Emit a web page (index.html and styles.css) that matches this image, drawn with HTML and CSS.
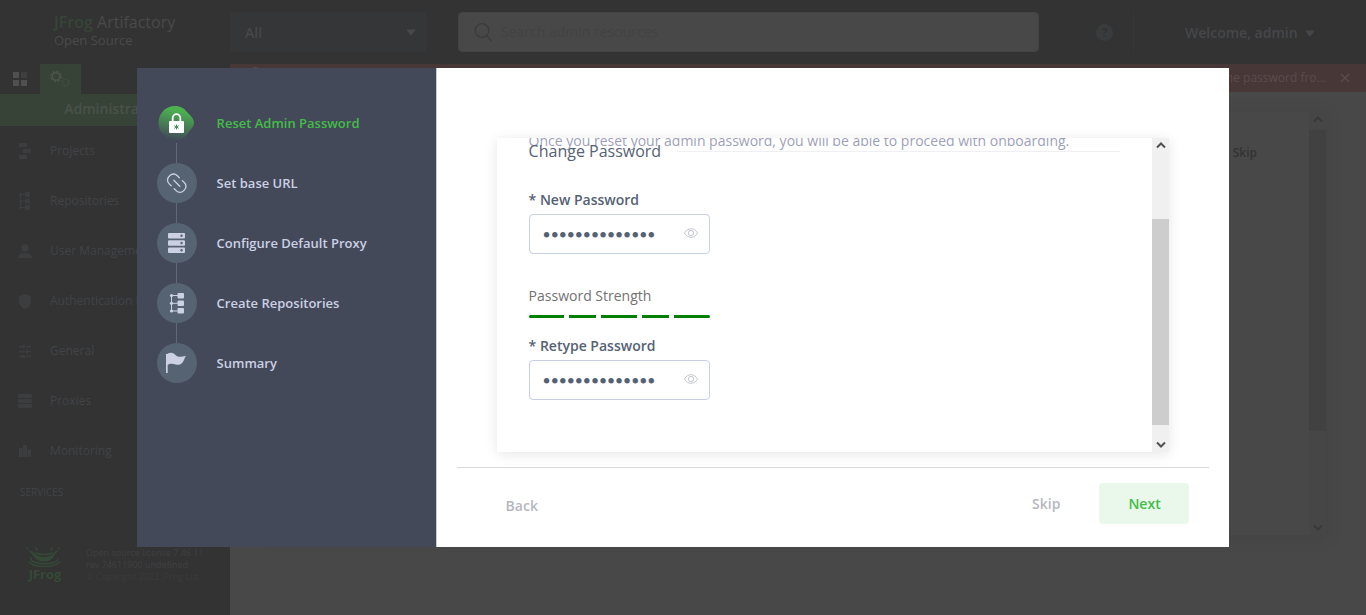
FILE: index.html
```html
<!DOCTYPE html>
<html lang="en">
<head>
<meta charset="utf-8">
<title>JFrog Artifactory</title>
<link rel="stylesheet" href="styles.css">
</head>
<body>
<div class="app">
  <header class="topbar">
    <div class="brand">
      <div class="brand-name"><span class="brand-frog">JFrog</span> Artifactory</div>
      <div class="brand-edition">Open Source</div>
    </div>
    <div class="scope">
      <select class="scope-select" aria-label="Scope"><option>All</option></select>
      <svg class="scope-caret" width="10" height="7" viewBox="0 0 10 7"><path d="M1 1h8L5 6z" fill="currentColor" stroke="currentColor" stroke-linejoin="round"/></svg>
    </div>
    <div class="search">
      <svg width="19" height="19" viewBox="0 0 19 19" fill="none" stroke="currentColor" stroke-width="1.3"><circle cx="8" cy="7.500" r="6.800"/><path d="M12.500 12.500l5 5.500"/></svg>
      <input class="search-input" type="text" placeholder="Search admin resources" aria-label="Search admin resources">
    </div>
    <button class="help" type="button" aria-label="Help">?</button>
    <button class="user" type="button">Welcome, admin
      <svg width="10" height="7" viewBox="0 0 10 7"><path d="M1 1h8L5 6z" fill="currentColor" stroke="currentColor" stroke-linejoin="round"/></svg>
    </button>
  </header>

  <aside class="sidebar">
    <div class="tabs">
      <button class="tab" type="button" aria-label="Application">
        <svg width="14" height="14" viewBox="0 0 14 14" fill="currentColor"><path d="M0 0h6v6H0zM0 8h6v6H0zM8 8h6v6H8z"/><path d="M8 0h6v6H8z" opacity=".4"/></svg>
      </button>
      <button class="tab tab-active" type="button" aria-label="Administration">
        <svg width="21" height="18" viewBox="0 0 21 18" fill="none" stroke="currentColor"><circle cx="6" cy="6.500" r="3.800" stroke-width="1.800"/><circle cx="6" cy="6.500" r="5.200" stroke-width="1.600" stroke-dasharray="2 2.080"/><g opacity=".45"><circle cx="15.500" cy="12.500" r="3" stroke-width="1.200"/><circle cx="15.500" cy="12.500" r="4.200" stroke-width="1.300" stroke-dasharray="1.600 1.700"/></g></svg>
      </button>
    </div>
    <div class="section-title">Administration</div>
    <nav class="menu">
      <a class="menu-item" href="#"><svg width="14" height="16" viewBox="0 0 14 16" fill="currentColor"><rect x="1" width="8" height="4" rx=".5"/><rect x="5" y="6" width="8" height="4" rx=".5"/><rect x="1" y="12" width="8" height="4" rx=".5"/></svg>Projects</a>
      <a class="menu-item" href="#"><svg width="14" height="18" viewBox="0 0 14 18" fill="currentColor"><path d="M2 2h6v1H3v5.500h5v1H3V15h5v1H2z"/><rect x="7" width="5" height="5" rx="1"/><rect x="7" y="6.500" width="5" height="5" rx="1"/><rect x="7" y="13" width="5" height="5" rx="1"/><circle cx="2.500" cy="2.500" r="1.500"/><circle cx="2.500" cy="9" r="1.500"/><circle cx="2.500" cy="15.500" r="1.500"/></svg>Repositories</a>
      <a class="menu-item" href="#"><svg width="14" height="14" viewBox="0 0 14 14" fill="currentColor"><circle cx="7" cy="4" r="3.800"/><path d="M0 14c0-3.500 3-5 7-5s7 1.500 7 5z"/></svg>User Management</a>
      <a class="menu-item" href="#"><svg width="14" height="15" viewBox="0 0 14 15" fill="currentColor"><path d="M7 0l6 2v5c0 4-2.500 6.700-6 8-3.500-1.300-6-4-6-8V2z"/></svg>Authentication Providers</a>
      <a class="menu-item" href="#"><svg width="14" height="13" viewBox="0 0 14 13" fill="currentColor"><path d="M1 1h3v1.500H1zM8 1h5v1.500H8zM1 6h6v1.500H1zM11 6h2v1.500h-2zM1 10.500h3V12H1zM8 10.500h5V12H8z"/><circle cx="5.500" cy="1.700" r="1.700"/><circle cx="9" cy="6.700" r="1.700"/><circle cx="5.500" cy="11.300" r="1.700"/></svg>General</a>
      <a class="menu-item" href="#"><svg width="14" height="14" viewBox="0 0 14 14" fill="currentColor"><rect width="14" height="4" rx="1"/><rect y="5" width="14" height="4" rx="1"/><rect y="10" width="14" height="4" rx="1"/></svg>Proxies</a>
      <a class="menu-item" href="#"><svg width="14" height="12" viewBox="0 0 14 12" fill="currentColor"><path d="M1 3h3.500v9H1zM5 0h4v12H5zM9.500 4.500H13V12H9.500z"/></svg>Monitoring</a>
    </nav>
    <div class="services">SERVICES</div>
    <div class="license">
      <div class="frog-logo">
        <svg width="36" height="20" viewBox="0 0 36 20" fill="none" stroke="currentColor" stroke-width="1.600" stroke-linecap="round"><path d="M10 6c3 2 13 2 16 0"/><path d="M8 7c1 9 19 9 20 0-4 5-16 5-20 0z" fill="currentColor"/><path d="M5 11c-2 7 26 8 27 1"/><path d="M3 15c6 6 24 6 31 0"/><path d="M1 1l.5.500M4 4l3 3M33 1l-.5.500M31 4l-3 3M10 1l1 2M26 1l-1 2"/></svg>
        <span>JFrog</span>
      </div>
      <div class="license-text">Open source license 7.46.11<br>rev 74611900 undefined<br><span class="copyright">© Copyright 2022 JFrog Ltd</span></div>
    </div>
  </aside>

  <main class="content">
    <div class="banner">
      <span class="banner-dot"></span>
      <span class="banner-text">the password fro...</span>
      <button class="banner-close" type="button" aria-label="Close"><svg width="10" height="10" viewBox="0 0 10 10" stroke="currentColor" stroke-width="1.200"><path d="M1 1l8 8M9 1L1 9"/></svg></button>
    </div>
    <div class="page-card">
      <a class="page-skip" href="#">Skip</a>
      <div class="rail rail-dim">
        <svg class="rail-arrow" width="10" height="7" viewBox="0 0 10 7"><path d="M1 5.500l4-4 4 4" fill="none" stroke="currentColor" stroke-width="2"/></svg>
        <div class="rail-track"><div class="rail-thumb"></div></div>
        <svg class="rail-arrow" width="10" height="7" viewBox="0 0 10 7"><path d="M1 1.500l4 4 4-4" fill="none" stroke="currentColor" stroke-width="2"/></svg>
      </div>
    </div>
  </main>
</div>

<div class="overlay">
  <div class="modal" role="dialog" aria-label="Onboarding">
    <ol class="steps">
      <li class="step step-current">
        <span class="step-icon"><svg width="40" height="40" viewBox="0 0 40 40"><defs><linearGradient id="blob" x1=".6" y1="0" x2=".4" y2="1"><stop offset=".15" stop-color="#4caf50"/><stop offset="1" stop-color="#434959"/></linearGradient></defs><path d="M18 3c6 0 9 2.500 12 6 4 4 7 7 7 11 0 3.500-3 6-6 10-3 4-6 7-11 7C10 37 1.500 30 1.500 20 1.500 11 8 3 18 3z" fill="url(#blob)"/><rect x="12" y="18" width="15" height="12" rx="1" fill="#fff"/><path d="M15.700 18v-3a3.800 3.800 0 0 1 7.600 0v3" fill="none" stroke="#fff" stroke-width="1.800"/><path d="M19.500 21.500v5M17.300 22.700l4.400 2.600M21.700 22.700l-4.400 2.600" stroke="#46865a" stroke-width="1"/></svg></span>Reset Admin Password</li>
      <li class="step">
        <span class="step-icon"><svg width="22" height="22" viewBox="0 0 22 22" fill="none" stroke="currentColor" stroke-width="1.300" stroke-linecap="round"><path d="M5.200 13.800L3 11.600a5 5 0 0 1 0-7.100l1-1a5 5 0 0 1 7.100 0l2.200 2.200"/><path d="M8.200 16.700l2.200 2.200a5 5 0 0 0 7.100 0l1-1a5 5 0 0 0 0-7.100l-2.200-2.200"/><path d="M7.800 8.200l6 6"/></svg></span>Set base URL</li>
      <li class="step">
        <span class="step-icon"><svg width="18" height="20" viewBox="0 0 18 20" fill="currentColor"><rect width="17" height="5.500" rx="1"/><rect y="7.300" width="17" height="5.500" rx="1"/><rect y="14.500" width="17" height="5.500" rx="1"/><g fill="#566373"><circle cx="13.500" cy="2.800" r="1.200"/><circle cx="13.500" cy="10" r="1.200"/><circle cx="13.500" cy="17.200" r="1.200"/></g></svg></span>Configure Default Proxy</li>
      <li class="step">
        <span class="step-icon"><svg width="16" height="21" viewBox="0 0 16 21"><path d="M2.500 2.500H9M2.500 10.300H9M2.500 18H9M2.500 2.500V18" fill="none" stroke="currentColor"/><g fill="currentColor"><rect x="8.500" width="6.500" height="5.500" rx="1"/><rect x="8.500" y="7.500" width="6.500" height="5.500" rx="1"/><rect x="8.500" y="15" width="6.500" height="5.500" rx="1"/><circle cx="2.500" cy="2.500" r="1.600"/><circle cx="2.500" cy="10.300" r="1.600"/><circle cx="2.500" cy="18" r="1.600"/></g></svg></span>Create Repositories</li>
      <li class="step">
        <span class="step-icon"><svg width="22" height="22" viewBox="0 0 22 22" fill="currentColor"><path d="M0 2h1.700v19H0z"/><path d="M0 3c3-3 7-3 10 .5 2 1.700 5 1.500 10 .2-1.700 2-2 7-6 8.800-4.500 1.500-6.500-2.700-13 .5H0z"/></svg></span>Summary</li>
    </ol>

    <div class="modal-main">
      <div class="panel">
        <form class="panel-body">
          <p class="intro">Once you reset your admin password, you will be able to proceed with onboarding.</p>
          <h2 class="section-head">Change Password</h2>
          <label class="field-label" for="new-password">* New Password</label>
          <div class="field">
            <input class="field-input" id="new-password" type="password" value="Artifactory#22">
            <button class="eye" type="button" aria-label="Show new password"><svg width="14" height="10" viewBox="0 0 14 10" fill="none" stroke="currentColor"><path d="M.5 5C3.500-.7 10.500-.7 13.500 5c-3 5.700-10 5.700-13 0z"/><circle cx="7" cy="5" r="2.600"/></svg></button>
          </div>
          <div class="strength">
            <span class="strength-label">Password Strength</span>
            <div class="strength-bars"><i></i><i></i><i></i><i></i><i></i></div>
          </div>
          <label class="field-label" for="retype-password">* Retype Password</label>
          <div class="field">
            <input class="field-input" id="retype-password" type="password" value="Artifactory#22">
            <button class="eye" type="button" aria-label="Show retyped password"><svg width="14" height="10" viewBox="0 0 14 10" fill="none" stroke="currentColor"><path d="M.5 5C3.500-.7 10.500-.7 13.500 5c-3 5.700-10 5.700-13 0z"/><circle cx="7" cy="5" r="2.600"/></svg></button>
          </div>
        </form>
        <div class="rail">
          <svg class="rail-arrow" width="10" height="7" viewBox="0 0 10 7"><path d="M1 5.500l4-4 4 4" fill="none" stroke="currentColor" stroke-width="2"/></svg>
          <div class="rail-track rail-track-end"><div class="rail-thumb"></div></div>
          <svg class="rail-arrow" width="10" height="7" viewBox="0 0 10 7"><path d="M1 1.500l4 4 4-4" fill="none" stroke="currentColor" stroke-width="2"/></svg>
        </div>
      </div>
      <footer class="actions">
        <button class="action action-back" type="button">Back</button>
        <button class="action" type="button">Skip</button>
        <button class="action action-next" type="button">Next</button>
      </footer>
    </div>
  </div>
</div>
</body>
</html>
```
FILE: styles.css
```css
* { box-sizing: border-box; }
body {
  margin: 0;
  font: 13px/20px "Open Sans", sans-serif;
  color: #414347;
  background: #484848;
}
button, input, select { font: inherit; color: inherit; border: 0; background: none; padding: 0; margin: 0; }
a { color: inherit; text-decoration: none; }
svg { display: block; flex: none; }

.app {
  display: grid;
  grid-template: 64px 1fr / 230px 1fr;
  height: 100vh;
  overflow: hidden;
}

/* top bar */
.topbar {
  grid-column: 1 / -1;
  display: flex;
  align-items: center;
  background: #333;
}
.brand { width: 230px; padding: 0 0 2px 54px; color: #4a4a4a; }
.brand-name { font-size: 16px; line-height: 18px; }
.brand-frog { color: #374537; font-weight: 600; }
.brand-edition { font-size: 13px; line-height: 18px; }
.scope { position: relative; width: 197px; }
.scope-select {
  appearance: none;
  width: 100%;
  height: 40px;
  padding: 2px 15px 0;
  border-radius: 4px;
  background: #343638;
  color: #46484a;
  font-size: 14px;
  font-weight: 600;
}
.scope-caret { position: absolute; right: 11px; top: 17px; color: #47494b; }
.search {
  flex: 1;
  display: flex;
  align-items: center;
  gap: 8px;
  height: 40px;
  margin-left: 31px;
  padding: 0 15px;
  border: 1px solid #424344;
  border-radius: 4px;
  background: #484848;
  color: #3b3b3c;
}
.search-input { flex: 1; font-size: 14px; outline: 0; }
.search-input::placeholder { color: #434343; opacity: 1; }
.help {
  width: 17px;
  height: 17px;
  margin: 0 20px 0 57px;
  border-radius: 50%;
  background: #3a3b3d;
  color: #333;
  font-size: 12px;
  line-height: 17px;
  font-weight: 700;
}
.user {
  display: flex;
  align-items: center;
  gap: 7px;
  width: 233px;
  height: 40px;
  padding: 2px 0 0 51px;
  border-left: 1px solid #373737;
  color: #46474a;
  font-size: 14px;
  font-weight: 600;
}

/* sidebar */
.sidebar { background: #333; overflow: hidden; }
.tabs { display: flex; height: 30px; }
.tab { display: flex; align-items: center; justify-content: center; width: 40px; color: #505050; }
.tab-active { width: 41px; background: #374337; color: #4b534b; }
.section-title {
  height: 32px;
  background: #374337;
  color: #4a524a;
  font-size: 14px;
  line-height: 30px;
  font-weight: 600;
  text-align: center;
}
.menu-item {
  display: flex;
  align-items: center;
  gap: 18px;
  height: 50px;
  padding-left: 18px;
  font-size: 12px;
  white-space: nowrap;
}
.menu-item svg { color: #3b3d3f; }
.services { padding: 6px 20px; font-size: 10px; line-height: 20px; }
.license { display: flex; gap: 22px; padding: 39px 26px 0; }
.frog-logo { width: 38px; color: #344a36; font-size: 13px; line-height: 14px; font-weight: 700; text-align: center; }
.license-text { font-size: 9px; line-height: 12px; color: #3f4042; white-space: nowrap; }
.copyright { color: #3a3b3c; }

/* page behind the dialog */
.content { display: flex; flex-direction: column; background: #484848; }
.banner {
  display: flex;
  align-items: center;
  justify-content: space-between;
  gap: 14px;
  height: 28px;
  padding: 0 16px 0 18px;
  background: #483737;
  color: #5a4d4d;
  font-size: 12px;
}
.banner-dot { width: 15px; height: 22px; border: 1px solid #5a4d4d; border-radius: 50%; }
.banner-text { flex: 1; text-align: right; }
.page-card {
  display: flex;
  justify-content: flex-end;
  height: 423px;
  margin: 20px 40px 0;
  box-shadow: 0 2px 10px #434343;
}
.page-skip { padding: 31px 52px 0 0; color: #333; font-size: 12px; font-weight: 600; }

/* scroll rails */
.rail {
  display: flex;
  flex-direction: column;
  align-items: center;
  gap: 7px;
  width: 17px;
  padding: 4px 0;
  background: #f0f0f0;
  color: #505050;
}
.rail-track { flex: 1; display: flex; flex-direction: column; width: 100%; }
.rail-track-end { justify-content: flex-end; padding-bottom: 9px; }
.rail-thumb { height: 206px; background: #cdcdcd; }
.rail-dim { background: #464646; color: #393939; }
.rail-dim .rail-thumb { height: 301px; background: #414141; }

/* onboarding dialog */
.overlay {
  position: fixed;
  inset: 0;
  display: flex;
  align-items: center;
  justify-content: center;
}
.modal { display: flex; width: 80%; background: #fff; }
.steps {
  width: 300px;
  margin: 0;
  padding: 35px 20px;
  list-style: none;
  display: flex;
  flex-direction: column;
  gap: 20px;
  border-right: 1px solid #c9cbd1;
  background: #434959;
}
.step {
  position: relative;
  display: flex;
  align-items: center;
  gap: 20px;
  height: 40px;
  color: #cbd0e3;
  font-weight: 600;
}
.step + .step::before {
  content: "";
  position: absolute;
  left: 19px;
  bottom: 100%;
  width: 1px;
  height: 20px;
  background: #5e6a7c;
}
.step-icon {
  display: flex;
  align-items: center;
  justify-content: center;
  width: 40px;
  height: 40px;
  border-radius: 50%;
  background: #566373;
}
.step-current { color: #43bc48; }
.step-current .step-icon { background: none; }

.modal-main { flex: 1; padding: 70px 20px 23px; }
.panel {
  display: flex;
  height: 314px;
  margin: 0 40px 15px;
  overflow: hidden;
  box-shadow: 0 2px 12px rgba(0, 0, 0, .1);
}
.panel-body { flex: 1; padding: 0 32px; overflow: hidden; font-size: 14px; }
.intro { margin: -7px 0 -11px; line-height: 20px; color: #9d9fba; white-space: nowrap; }
.section-head {
  display: flex;
  align-items: center;
  gap: 16px;
  margin: 0 0 28px;
  font-size: 16px;
  line-height: 22px;
  font-weight: 400;
  color: #556274;
}
.section-head::after { content: ""; flex: 1; height: 1px; background: #f0f0f4; }
.field-label { display: block; margin-bottom: 4px; line-height: 20px; font-weight: 600; color: #556274; }
.field {
  display: flex;
  align-items: center;
  width: 181px;
  height: 40px;
  padding: 0 11px 0 13px;
  border: 1px solid #c7cfe3;
  border-radius: 4px;
}
.field-input {
  flex: 1;
  min-width: 0;
  padding-top: 3px;
  outline: 0;
  font-family: "Liberation Serif", serif;
  font-size: 23px;
  color: #556274;
}
.eye { padding-bottom: 2px; color: #c3c6cf; }
.strength { width: 181px; margin: 32px 0 18px; color: #727272; }
.strength-label { display: block; margin-bottom: 9px; line-height: 20px; }
.strength-bars { display: flex; gap: 5px; }
.strength-bars i { flex: 4; height: 3px; background: green; }
.strength-bars i:nth-child(even) { flex: 3; }
.strength-bars i:first-child { border-radius: 2px 0 0 2px; }
.strength-bars i:last-child { border-radius: 0 2px 2px 0; }

.actions {
  display: flex;
  align-items: center;
  padding: 15px 20px 0;
  border-top: 1px solid #d9d9dd;
}
.action { height: 41px; padding: 0 29px; border-radius: 4px; color: #b5b7bf; font-size: 14px; font-weight: 600; }
.action-back { margin-right: auto; padding-top: 4px; }
.action-next { width: 90px; margin-left: 10px; background: #eaf8eb; color: #43bc48; }
```
